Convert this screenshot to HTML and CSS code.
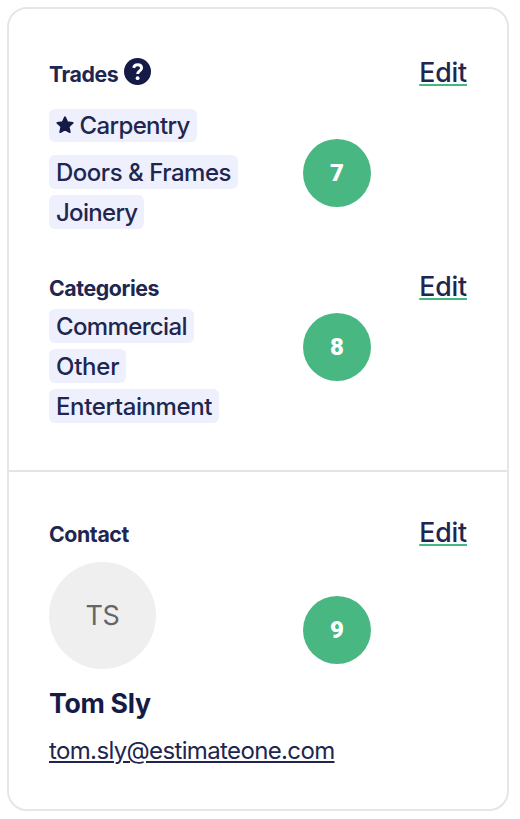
FILE: index.html
```html
<!DOCTYPE html>
<html lang="en">
<head>
<meta charset="utf-8">
<title>Company profile</title>
<link rel="stylesheet" href="styles.css">
</head>
<body>
<main class="card">
  <section class="panel">
    <div class="group trades">
      <header class="head">
        <h2 class="title">Trades</h2>
        <svg class="help" viewBox="0 0 27 27" aria-hidden="true">
          <circle cx="13.5" cy="13.5" r="13.5" fill="#151b46"/>
          <path d="M9.6 9.9C10.1 7.7 11.8 6.7 13.6 6.7c2.3 0 4 1.3 4 3.3 0 2.9-3.9 3-3.9 6" fill="none" stroke="#fff" stroke-width="2.9"/>
          <circle cx="13.6" cy="20.2" r="1.9" fill="#fff"/>
        </svg>
        <a class="edit">Edit</a>
      </header>
      <ul class="tags">
        <li class="tag primary"><svg class="star" viewBox="0 0 18 18" aria-hidden="true"><path d="M9 1.2l2.3 5 5.4.6-4 3.8 1.1 5.5L9 13.4l-4.8 2.7 1.1-5.5-4-3.8 5.4-.6z" fill="#151b46" stroke="#151b46" stroke-width="1.8" stroke-linejoin="round"/></svg>Carpentry</li>
        <li class="tag doors">Doors &amp; Frames</li>
        <li class="tag joinery">Joinery</li>
      </ul>
      <span class="badge">7</span>
    </div>
    <div class="group categories">
      <header class="head">
        <h2 class="title">Categories</h2>
        <a class="edit">Edit</a>
      </header>
      <ul class="tags">
        <li class="tag commercial">Commercial</li>
        <li class="tag other">Other</li>
        <li class="tag entertainment">Entertainment</li>
      </ul>
      <span class="badge">8</span>
    </div>
  </section>
  <section class="panel contact">
    <div class="group">
      <header class="head">
        <h2 class="title">Contact</h2>
        <a class="edit">Edit</a>
      </header>
      <div class="avatar">TS</div>
      <p class="name">Tom Sly</p>
      <a class="email">tom.sly@estimateone.com</a>
      <span class="badge">9</span>
    </div>
  </section>
</main>
</body>
</html>
```
FILE: styles.css
```css
* { box-sizing: border-box; }

body {
  margin: 0;
  padding: 7px;
  background: #fff;
  color: #20264f;
  font-family: Inter, "Liberation Sans", sans-serif;
}

.card {
  width: 502px;
  height: 804px;
  border: 2px solid #e6e6e6;
  border-radius: 20px;
  overflow: hidden;
}

.panel { padding: 47px 40px 0; }

.panel.contact {
  border-top: 2px solid #e4e4e4;
  padding-top: 44px;
}

.group { position: relative; }
.trades { height: 214px; }
.categories { height: 200px; }

.head {
  display: flex;
  align-items: baseline;
  height: 32px;
}

.title {
  margin: 0;
  font-size: 21.3px;
  line-height: 32px;
  font-weight: 700;
  letter-spacing: -0.4px;
}

.help {
  width: 27px;
  height: 27px;
  margin-left: 6px;
  align-self: flex-start;
  margin-top: 2px;
}

.edit {
  margin-left: auto;
  font-size: 26.7px;
  line-height: 32px;
  font-weight: 500;
  letter-spacing: -0.15px;
  text-decoration: underline;
  text-decoration-color: #45b882;
  text-decoration-thickness: 2px;
  text-underline-offset: 2px;
}

.tags {
  display: flex;
  flex-direction: column;
  align-items: flex-start;
  gap: 6.5px;
  margin: 0;
  padding: 7.4px 0 0;
  list-style: none;
}

.trades .tags { padding-top: 20.5px; }

.tag {
  display: flex;
  align-items: center;
  height: 33.5px;
  padding: 1px 7px 0;
  border-radius: 6px;
  background: #eef0fd;
  font-size: 24px;
  font-weight: 500;
  line-height: 33.5px;
  letter-spacing: -0.63px;
}

.tag.doors { letter-spacing: -0.48px; }
.tag.joinery { letter-spacing: -0.7px; }
.tag.other { letter-spacing: -0.25px; }
.tag.entertainment { letter-spacing: -0.38px; }
.tag.primary { margin-bottom: 6.5px; padding-top: 0; }

.star {
  width: 18px;
  height: 18px;
  margin-right: 5.5px;
}

.badge {
  position: absolute;
  left: 254px;
  width: 68px;
  height: 68px;
  border-radius: 50%;
  background: #48b781;
  color: #fff;
  font-family: Roboto, "Liberation Sans", sans-serif;
  font-size: 24px;
  font-weight: 900;
  line-height: 68px;
  text-align: center;
}

.trades .badge { top: 83px; }
.categories .badge { top: 43px; }
.contact .badge { top: 80px; }

.avatar {
  width: 107px;
  height: 107px;
  margin-top: 14px;
  border-radius: 50%;
  background: #efefef;
  color: #666;
  font-size: 27px;
  letter-spacing: -0.4px;
  line-height: 107px;
  text-align: center;
}

.name {
  margin: 18px 0 0;
  color: #151b46;
  font-size: 26.7px;
  font-weight: 700;
  letter-spacing: -0.3px;
  line-height: 32px;
}

.email {
  display: block;
  width: fit-content;
  margin-top: 17px;
  font-size: 24px;
  letter-spacing: -0.64px;
  line-height: 30px;
  text-decoration: underline;
  text-decoration-thickness: 2px;
  text-underline-offset: 2px;
}
```
